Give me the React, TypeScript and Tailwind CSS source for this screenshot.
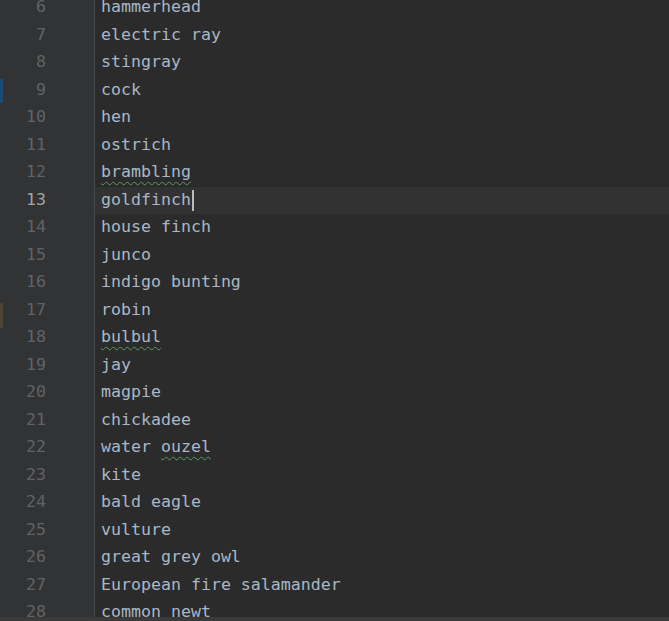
import React from "react";

const lines: { n: number; text: React.ReactNode }[] = [
  { n: 6, text: "hammerhead" },
  { n: 7, text: "electric ray" },
  { n: 8, text: "stingray" },
  { n: 9, text: "cock" },
  { n: 10, text: "hen" },
  { n: 11, text: "ostrich" },
  { n: 12, text: <Typo>brambling</Typo> },
  { n: 13, text: "goldfinch" },
  { n: 14, text: "house finch" },
  { n: 15, text: "junco" },
  { n: 16, text: "indigo bunting" },
  { n: 17, text: "robin" },
  { n: 18, text: <Typo>bulbul</Typo> },
  { n: 19, text: "jay" },
  { n: 20, text: "magpie" },
  { n: 21, text: "chickadee" },
  { n: 22, text: <>water <Typo>ouzel</Typo></> },
  { n: 23, text: "kite" },
  { n: 24, text: "bald eagle" },
  { n: 25, text: "vulture" },
  { n: 26, text: "great grey owl" },
  { n: 27, text: "European fire salamander" },
  { n: 28, text: "common newt" },
];

function Typo({ children }: { children: React.ReactNode }) {
  return (
    <span className="underline decoration-wavy decoration-[#5f9a5c] decoration-1 underline-offset-[4px]">
      {children}
    </span>
  );
}

export default function App() {
  return (
    <div className="relative h-[621px] w-[669px] overflow-hidden bg-[#2b2b2b] font-['DejaVu_Sans_Mono',monospace] text-[16.6px]">
      <div className="absolute left-0 top-0 h-full w-[94px] border-r border-[#4a4a4a] bg-[#313335]" />
      {/* vcs change markers */}
      <div className="absolute left-0 top-[79px] h-[24px] w-[3px] bg-[#1d4a72]" />
      <div className="absolute left-0 top-[303px] h-[25px] w-[3px] bg-[#4d4336]" />

      <div className="relative -mt-[6px]">
        {lines.map((l) => {
          const current = l.n === 13;
          return (
            <div
              key={l.n}
              className={`flex h-[27.5px] items-center ${current ? "bg-[#323232]" : ""}`}
            >
              <div
                className={`w-[47px] shrink-0 pr-[1px] text-right ${
                  current ? "bg-[#313335] text-[#a4a3a3]" : "text-[#606366]"
                }`}
              >
                {l.n}
              </div>
              <div className="w-[48px] shrink-0 self-stretch bg-[#313335] border-r border-[#4a4a4a]" />
              <div className="flex items-center pl-[6px] text-[#a9b7c6] whitespace-pre">
                {l.text}
                {current && <span className="ml-[1px] inline-block h-[21px] w-[2px] bg-[#bbbbbb]" />}
              </div>
            </div>
          );
        })}
      </div>
      <div className="absolute bottom-0 left-0 h-[4px] w-full bg-[#3a3a3a]" />
    </div>
  );
}
